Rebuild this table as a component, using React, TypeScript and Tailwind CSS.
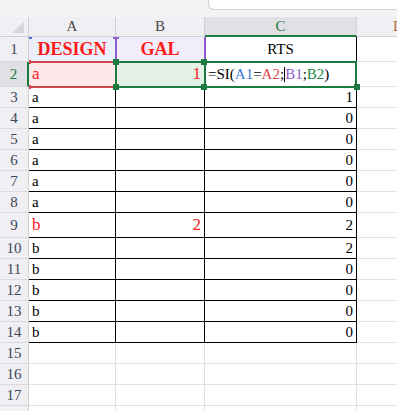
import React from 'react';

const GREEN = '#1d7a3e';

type Row = {
  n: number;
  h: number;
  a?: string;
  b?: string;
  c?: string;
  red?: boolean;
  table: boolean;
  hideNum?: boolean;
};

const rows: Row[] = [
  { n: 3, h: 21, a: 'a', c: '1', table: true },
  { n: 4, h: 21, a: 'a', c: '0', table: true },
  { n: 5, h: 21, a: 'a', c: '0', table: true },
  { n: 6, h: 21, a: 'a', c: '0', table: true },
  { n: 7, h: 21, a: 'a', c: '0', table: true },
  { n: 8, h: 21, a: 'a', c: '0', table: true },
  { n: 9, h: 25, a: 'b', b: '2', c: '2', red: true, table: true },
  { n: 10, h: 21, a: 'b', c: '2', table: true },
  { n: 11, h: 21, a: 'b', c: '0', table: true },
  { n: 12, h: 21, a: 'b', c: '0', table: true },
  { n: 13, h: 21, a: 'b', c: '0', table: true },
  { n: 14, h: 21, a: 'b', c: '0', table: true },
  { n: 15, h: 21, table: false },
  { n: 16, h: 21, table: false },
  { n: 17, h: 21, table: false },
  { n: 18, h: 21, table: false, hideNum: true },
];

function RowHeader({ n, h, active, hideNum }: { n: number; h: number; active?: boolean; hideNum?: boolean }) {
  return (
    <div
      className={`w-[29px] shrink-0 flex items-center justify-center border-b border-[#dcdbe0] text-[15px] ${
        active
          ? 'bg-[#e1e0e4] text-[#1d7a3e] border-r-2 border-r-[#1d7a3e]'
          : 'bg-[#f0eff3] text-[#3d4657] border-r border-r-[#d0cfd4]'
      }`}
      style={{ height: h }}
    >
      {hideNum ? null : n}
    </div>
  );
}

function DataRow({ r }: { r: Row }) {
  const line = r.table ? 'border-black' : 'border-[#e1e1e1]';
  const redText = r.red ? 'text-[#ff1a1a] text-[17px]' : 'text-black text-[15px]';
  return (
    <div className="flex" style={{ height: r.h }}>
      <RowHeader n={r.n} h={r.h} hideNum={r.hideNum} />
      <div className={`w-[87px] shrink-0 border-b border-r ${line} flex items-center pl-[3px] ${redText}`}>
        {r.a}
      </div>
      <div className={`w-[89px] shrink-0 border-b border-r ${line} flex items-center justify-end pr-[3px] ${redText}`}>
        {r.b}
      </div>
      <div className={`w-[152px] shrink-0 border-b border-r ${line} flex items-center justify-end pr-[3px] text-[15px] text-black`}>
        {r.c}
      </div>
      <div className="flex-1 border-b border-[#e1e1e1]" />
    </div>
  );
}

export default function App() {
  return (
    <div className="relative w-[397px] h-[411px] overflow-hidden bg-white font-['Liberation_Serif',serif]">
      {/* formula bar remnant */}
      <div className="h-[17px] bg-[#f3f2f5] flex justify-end">
        <div className="w-[189px] h-[10px] bg-white border-l border-b border-[#d4d3d8] rounded-bl-[6px]" />
      </div>

      {/* column headers */}
      <div className="flex h-[20px] bg-[#f0eff3] text-[15px] text-[#4a4a4a]">
        <div className="relative w-[29px] shrink-0 border-r border-b border-[#d0cfd4]">
          <div className="absolute right-[4px] bottom-[3px] w-0 h-0 border-l-[12px] border-l-transparent border-b-[11px] border-b-[#d6d5da]" />
        </div>
        <div className="w-[87px] shrink-0 border-r border-b border-[#d0cfd4] flex items-center justify-center">A</div>
        <div className="w-[89px] shrink-0 border-r border-b border-[#d0cfd4] flex items-center justify-center">B</div>
        <div className="w-[152px] shrink-0 border-r border-[#d0cfd4] border-b-2 border-b-[#1d7a3e] bg-[#e1e0e4] text-[#1d7a3e] flex items-center justify-center">
          C
        </div>
        <div className="flex-1 border-b border-[#d0cfd4] flex items-center pl-[36px] text-[#b0703a]">D</div>
      </div>

      {/* row 1 */}
      <div className="flex h-[25px]">
        <RowHeader n={1} h={25} />
        <div className="w-[87px] shrink-0 border-b border-r border-black bg-[#eaeff9] flex items-center justify-center text-[18px] font-bold text-[#ff1a1a]">
          DESIGN
        </div>
        <div className="w-[89px] shrink-0 border-b border-r border-black bg-[#f2edfb] flex items-center justify-center text-[18px] font-bold text-[#ff1a1a]">
          GAL
        </div>
        <div className="w-[152px] shrink-0 border-b border-r border-black flex items-center justify-center text-[15px] text-black">
          RTS
        </div>
        <div className="flex-1 border-b border-[#e1e1e1]" />
      </div>

      {/* row 2 */}
      <div className="flex h-[25px]">
        <RowHeader n={2} h={25} active />
        <div className="w-[87px] shrink-0 border-b border-r border-black bg-[#fde8ea] flex items-center pl-[3px] text-[17px] text-[#ff1a1a]">
          a
        </div>
        <div className="w-[89px] shrink-0 border-b border-r border-black bg-[#e3f1e7] flex items-center justify-end pr-[3px] text-[17px] text-[#ff1a1a]">
          1
        </div>
        <div className="w-[152px] shrink-0 border-b border-r border-black flex items-center pl-[3px] text-[15px] text-black whitespace-nowrap">
          <span>=SI(</span>
          <span className="text-[#3a78d4]">A1</span>
          <span>=</span>
          <span className="text-[#e34444]">A2</span>
          <span>;</span>
          <span className="inline-block w-px h-[15px] bg-black" />
          <span className="text-[#8d5ccf]">B1</span>
          <span>;</span>
          <span className="text-[#1e8a47]">B2</span>
          <span>)</span>
        </div>
        <div className="flex-1 border-b border-[#e1e1e1]" />
      </div>

      {rows.map((r) => (
        <DataRow key={r.n} r={r} />
      ))}

      {/* reference highlights */}
      <div className="absolute left-[29px] top-[37px] w-[3px] h-[2px] bg-[#3a78d4]" />
      <div className="absolute left-[115px] top-[37px] w-[91px] h-[25px] border-x-2 border-[#8d5ccf]" />
      <div className="absolute left-[113px] top-[37px] w-[6px] h-[2px] bg-[#8d5ccf]" />

      <div className="absolute left-[29px] top-[61px] w-[86px] h-[27px] border-y-2 border-[#cc4850]" />
      <div className="absolute left-[29px] top-[60px] w-[2px] h-[4px] bg-[#cc4850]" />
      <div className="absolute left-[29px] top-[85px] w-[2px] h-[4px] bg-[#cc4850]" />

      <div className="absolute left-[115px] top-[61px] w-[91px] h-[27px] border-2" style={{ borderColor: GREEN }} />
      <div className="absolute left-[204px] top-[61px] w-[153px] h-[27px] border-2" style={{ borderColor: GREEN }} />

      {[
        [113, 59],
        [113, 84],
        [201, 59],
        [201, 84],
        [354, 84],
      ].map(([x, y]) => (
        <div
          key={`${x}-${y}`}
          className="absolute w-[6px] h-[6px] bg-[#1d7a3e]"
          style={{ left: x, top: y }}
        />
      ))}
    </div>
  );
}
